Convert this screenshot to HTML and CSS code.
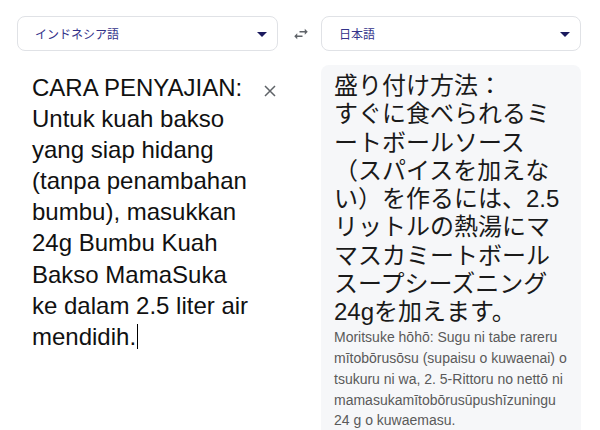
FILE: index.html
```html
<!DOCTYPE html>
<html lang="ja">
<head>
<meta charset="utf-8">
<link rel="stylesheet" href="styles.css">
</head>
<body>
<div class="app">
  <div class="select"><span class="label">インドネシア語</span><span class="caret"></span></div>
  <div class="swap">
    <svg viewBox="0 0 24 24" width="18" height="18"><path fill="#5f6368" d="M6.99 11L3 15l3.99 4v-3H14v-2H6.99v-3zM21 9l-3.99-4v3H10v2h7.01v3L21 9z"/></svg>
  </div>
  <div class="select"><span class="label">日本語</span><span class="caret"></span></div>

  <div class="source">
    <div class="src-text">CARA PENYAJIAN:<br>Untuk kuah bakso<br>yang siap hidang<br>(tanpa penambahan<br>bumbu), masukkan<br>24g Bumbu Kuah<br>Bakso MamaSuka<br>ke dalam 2.5 liter air<br>mendidih.<span class="cursor"></span></div>
    <div class="close">
      <svg viewBox="0 0 14 14" width="14" height="14"><path d="M2 2L12 12M12 2L2 12" stroke="#5f6368" stroke-width="1.5" fill="none"/></svg>
    </div>
  </div>
  <div class="gutter"></div>
  <div class="target">
    <div class="tgt-text">盛り付け方法：<br>すぐに食べられるミ<br>ートボールソース<br>（スパイスを加えな<br>い）を作るには、2.5<br>リットルの熱湯にマ<br>マスカミートボール<br>スープシーズニング<br>24gを加えます。</div>
    <div class="roman">Moritsuke hōhō: Sugu ni tabe rareru<br>mītobōrusōsu (supaisu o kuwaenai) o<br>tsukuru ni wa, 2. 5-Rittoru no nettō ni<br>mamasukamītobōrusūpushīzuningu<br>24 g o kuwaemasu.</div>
  </div>
</div>
</body>
</html>
```

FILE: styles.css
```css
html, body {
  margin: 0;
  padding: 0;
  background: #ffffff;
}
body {
  overflow: hidden;
}
.app {
  display: grid;
  grid-template-columns: 261px 43px 260px;
  grid-template-rows: 35px auto;
  row-gap: 14px;
  padding: 16px 18px 0 17px;
}
.select {
  box-sizing: border-box;
  border: 1px solid #e0e2e6;
  border-radius: 8px;
  display: flex;
  align-items: center;
  justify-content: space-between;
  padding: 0 10px 0 17px;
  font-family: "Noto Sans CJK JP", sans-serif;
  font-size: 12px;
  color: #33328a;
}
.caret {
  width: 0;
  height: 0;
  border-left: 5px solid transparent;
  border-right: 5px solid transparent;
  border-top: 5px solid #1b1a5e;
  margin-top: 1px;
}
.swap {
  display: flex;
  align-items: center;
  justify-content: center;
  padding-left: 2px;
}
.source {
  display: flex;
  justify-content: space-between;
  padding: 7px 0 0 15px;
}
.src-text {
  font-family: "Liberation Sans", Arial, sans-serif;
  font-size: 24px;
  line-height: 31.1px;
  color: #111111;
}
.cursor {
  display: inline-block;
  width: 0;
  height: 25px;
  border-left: 1px solid #000;
  vertical-align: -4px;
  margin-left: 1px;
}
.close {
  padding: 12px 1px 0 0;
}
.close svg {
  display: block;
}
.target {
  box-sizing: border-box;
  background: #f6f7f9;
  border-radius: 8px 8px 0 0;
  height: 365px;
  overflow: hidden;
  padding: 7px 10px 0 13px;
}
.tgt-text {
  font-family: "Liberation Sans", "Noto Sans CJK JP", sans-serif;
  font-size: 24px;
  line-height: 28.25px;
  color: #1a1a1a;
  white-space: nowrap;
}
.roman {
  font-family: "Liberation Sans", Arial, sans-serif;
  font-size: 14px;
  line-height: 20.8px;
  color: #5a5a5a;
  margin-top: 1px;
  white-space: nowrap;
}
```
